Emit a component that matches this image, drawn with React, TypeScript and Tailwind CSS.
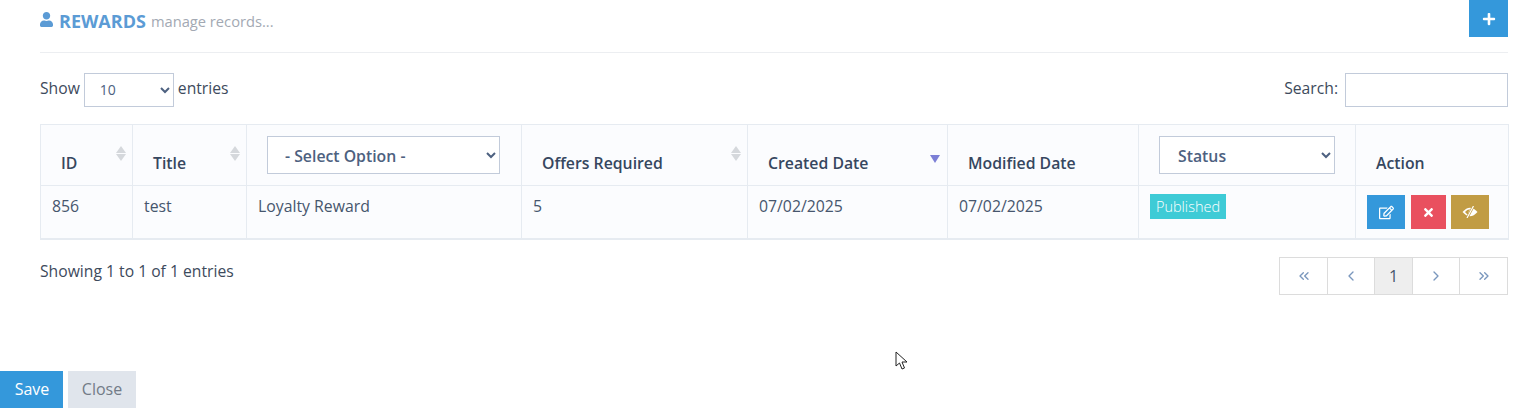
import { FaUser, FaPlus, FaRegEdit, FaTimes } from "react-icons/fa"
import { ChevronsLeft, ChevronLeft, ChevronRight, ChevronsRight } from "lucide-react"

function SortArrows({ active }: { active?: boolean }) {
    if (active) {
        return <span className="absolute right-[7px] top-[30px] w-0 h-0 border-x-[5px] border-x-transparent border-t-[8px] border-t-[#7c7fd6]" />
    }
    return (
        <span className="absolute right-[6px] top-[21px] flex flex-col gap-y-[1px]">
            <span className="w-0 h-0 border-x-[5px] border-x-transparent border-b-[7px] border-b-[#d5d8dc]" />
            <span className="w-0 h-0 border-x-[5px] border-x-transparent border-t-[7px] border-t-[#d5d8dc]" />
        </span>
    )
}

function EyeSlash() {
    return (
        <svg width="16" height="12" viewBox="0 0 16 12">
            <path d="M0.5 6 Q8 -2.5 15.5 6 Q8 14.5 0.5 6Z" fill="#fff" />
            <path d="M3 6 Q5 3.4 8 3.2 Q6 5.5 6.5 8.8 Q4.5 8 3 6Z" fill="#c19c44" />
            <path d="M5 12 L11.5 0" stroke="#c19c44" strokeWidth="2.6" />
            <path d="M5 12 L11.5 0" stroke="#fff" strokeWidth="1.2" />
        </svg>
    )
}

const thClass = "relative border border-[#e6ebf1] align-bottom text-left text-[15.8px] font-semibold text-[#36475f] pl-[20px] pb-[11px] leading-[22px]"
const tdClass = "border border-[#e6ebf1] border-b-2 align-top text-[15.8px] text-[#46566d] pl-[11px] pt-[8px] leading-[24px]"
const selectClass = "h-[38px] w-full border border-[#c2cbda] bg-white text-[15.8px] font-semibold text-[#4d6180] pl-[13px] pt-[1px] pr-1 outline-none"

const PAGES = [
    { w: "w-[47px]", icon: <ChevronsLeft size={16} strokeWidth={2} /> },
    { w: "w-[47px]", icon: <ChevronLeft size={16} strokeWidth={2} /> },
    { w: "w-[38px]", icon: "1", current: true },
    { w: "w-[47px]", icon: <ChevronRight size={16} strokeWidth={2} /> },
    { w: "w-[48px]", icon: <ChevronsRight size={16} strokeWidth={2} /> },
]

function App() {
    return (
        <div className="relative h-[408px] overflow-hidden bg-white font-['Open_Sans',sans-serif] flex flex-col">
            <div className="ml-[40px] mr-[25px] h-[53px] border-b border-[#eceef1] flex justify-between items-start">
                <div className="flex items-center mt-[8px] h-[26px]">
                    <FaUser className="w-[13px] h-[15px] text-[#5b9bd5] mr-[6px] mb-[3px]" />
                    <span className="text-[#5b9bd5] text-[18px] font-bold">REWARDS</span>
                    <span className="text-[#a3a9b3] text-[14.7px] ml-[5px] mt-[1px]">manage records...</span>
                </div>
                <button className="w-[39px] h-[37px] bg-[#3498db] text-white flex items-center justify-center">
                    <FaPlus size={14} />
                </button>
            </div>

            <div className="ml-[40px] mr-[25px] mt-[20px] h-[33px] flex justify-between items-center text-[15.7px] text-[#3d4a5c]">
                <div className="flex items-center">
                    <span className="mr-[4px] -mt-[2px]">Show</span>
                    <select className="w-[90px] h-[34px] border border-[#c2cbda] bg-white text-[14px] text-[#4d6180] pl-[11px] outline-none">
                        <option>10</option>
                    </select>
                    <span className="ml-[4px] -mt-[2px]">entries</span>
                </div>
                <div className="flex items-center">
                    <span className="mr-[7px] -mt-[2px]">Search:</span>
                    <input className="w-[163px] h-[34px] border border-[#c2cbda] bg-white outline-none" />
                </div>
            </div>

            <div className="ml-[40px] mr-[25px] mt-[18px]">
                <table className="w-[1468px] table-fixed border-collapse bg-[#fbfcfe]">
                    <colgroup>
                        <col className="w-[92px]" />
                        <col className="w-[114px]" />
                        <col className="w-[275px]" />
                        <col className="w-[226px]" />
                        <col className="w-[200px]" />
                        <col className="w-[191px]" />
                        <col className="w-[217px]" />
                        <col className="w-[153px]" />
                    </colgroup>
                    <thead>
                        <tr className="h-[61px]">
                            <th className={thClass}>ID<SortArrows /></th>
                            <th className={thClass}>Title<SortArrows /></th>
                            <th className={thClass + " !pr-[21px]"}>
                                <select className={selectClass}>
                                    <option>- Select Option -</option>
                                </select>
                            </th>
                            <th className={thClass}>Offers Required<SortArrows /></th>
                            <th className={thClass}>Created Date<SortArrows active /></th>
                            <th className={thClass}>Modified Date</th>
                            <th className={thClass + " !pr-[20px]"}>
                                <select className={selectClass + " !pl-[14px]"}>
                                    <option>Status</option>
                                </select>
                            </th>
                            <th className={thClass}>Action</th>
                        </tr>
                    </thead>
                    <tbody>
                        <tr className="h-[53px]">
                            <td className={tdClass}>856</td>
                            <td className={tdClass}>test</td>
                            <td className={tdClass}>Loyalty Reward</td>
                            <td className={tdClass}>5</td>
                            <td className={tdClass}>07/02/2025</td>
                            <td className={tdClass}>07/02/2025</td>
                            <td className={tdClass}>
                                <span className="block w-[76px] h-[25px] bg-[#3ecbd6] text-white text-[14.5px] font-light leading-[25px] text-center">Published</span>
                            </td>
                            <td className={tdClass}>
                                <div className="flex mt-[1px]">
                                    <button className="w-[38px] h-[34px] mr-[6px] bg-[#3498db] text-white flex items-center justify-center"><FaRegEdit size={15} /></button>
                                    <button className="w-[35px] h-[34px] mr-[5px] bg-[#e9505f] text-white flex items-center justify-center"><FaTimes size={13} /></button>
                                    <button className="w-[38px] h-[34px] bg-[#c19c44] text-white flex items-center justify-center"><EyeSlash /></button>
                                </div>
                            </td>
                        </tr>
                    </tbody>
                </table>
            </div>

            <div className="ml-[40px] mr-[25px] mt-[17px] flex justify-between items-start">
                <span className="text-[15.7px] text-[#3d4a5c] mt-[3px]">Showing 1 to 1 of 1 entries</span>
                <div className="flex border border-[#dcdcdc] h-[38px]">
                    {PAGES.map((page, index) =>
                        <span key={index}
                            className={`${page.w} flex items-center justify-center border-l border-[#dcdcdc] first:border-l-0 ${page.current ? "bg-[#eeeeee] text-[#46566d] text-[16px]" : "text-[#7a97bd]"}`}>
                            {page.icon}
                        </span>
                    )}
                </div>
            </div>

            <div className="mt-auto flex gap-x-[5px]">
                <button className="w-[63px] h-[37px] pb-[2px] pl-[1px] bg-[#3498db] text-white text-[16px]">Save</button>
                <button className="w-[68px] h-[37px] pb-[2px] bg-[#e0e5ec] text-[#727b87] text-[16px]">Close</button>
            </div>

            <svg className="absolute left-[895px] top-[351px]" width="13" height="20" viewBox="0 0 13 20">
                <path d="M1 1 L1 15 L4.5 12 L7 18 L9.5 17 L7 11 L12 11 Z" fill="#fff" stroke="#222" strokeWidth="1" strokeLinejoin="round" />
            </svg>
        </div>
    )
}

export default App
